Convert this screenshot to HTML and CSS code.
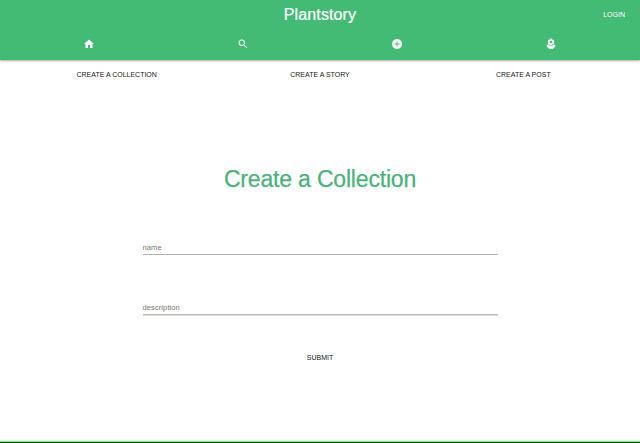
FILE: index.html
```html
<!DOCTYPE html>
<html lang="en">
<head>
<meta charset="utf-8">
<title>Plantstory</title>
<link rel="stylesheet" href="styles.css">
</head>
<body>
<header class="app-bar">
  <div class="top">
    <h1 class="brand">Plantstory</h1>
    <a class="login">LOGIN</a>
  </div>
  <nav class="tabs">
    <a class="tab"><svg class="icon" viewBox="0 0 24 24"><path d="M10 20v-6h4v6h5v-8h3L12 3 2 12h3v8z"/></svg></a>
    <a class="tab"><svg class="icon" viewBox="0 0 24 24"><path d="M15.5 14h-.79l-.28-.27C15.41 12.59 16 11.11 16 9.5 16 5.91 13.09 3 9.5 3S3 5.91 3 9.5 5.91 16 9.5 16c1.61 0 3.09-.59 4.23-1.57l.27.28v.79l5 4.99L20.49 19l-4.99-5zm-6 0C7.01 14 5 11.99 5 9.5S7.01 5 9.5 5 14 7.01 14 9.5 11.99 14 9.5 14z"/></svg></a>
    <a class="tab"><svg class="icon" viewBox="0 0 24 24"><path d="M12 2C6.48 2 2 6.48 2 12s4.48 10 10 10 10-4.48 10-10S17.52 2 12 2zm5 11h-4v4h-2v-4H7v-2h4V7h2v4h4v2z"/></svg></a>
    <a class="tab"><svg class="icon" viewBox="0 0 24 24"><path d="M3 13.5c0 5 4.03 8.500 9 8.500s9-3.500 9-8.500c-4 0-7 1.300-9 3.500-2-2.200-5-3.500-9-3.500zM5.6 10.25c0 1.38 1.12 2.5 2.5 2.5.53 0 1.01-.16 1.42-.44l-.02.19c0 1.38 1.12 2.5 2.5 2.5s2.5-1.12 2.5-2.5l-.02-.19c.4.28.89.44 1.42.44 1.38 0 2.5-1.12 2.5-2.5 0-1-.59-1.85-1.43-2.25.84-.4 1.43-1.25 1.43-2.25 0-1.38-1.12-2.5-2.5-2.5-.53 0-1.01.16-1.42.44l.02-.19C14.5 2.12 13.38 1 12 1S9.5 2.12 9.5 3.5l.02.19c-.4-.28-.89-.44-1.42-.44-1.38 0-2.5 1.12-2.5 2.5 0 1 .59 1.85 1.43 2.25-.84.4-1.43 1.25-1.43 2.25zM12 5.5c1.38 0 2.5 1.12 2.5 2.5s-1.12 2.5-2.5 2.5S9.5 9.38 9.5 8s1.12-2.5 2.5-2.5z"/></svg></a>
  </nav>
</header>
<nav class="actions">
  <a class="action">CREATE A COLLECTION</a>
  <a class="action">CREATE A STORY</a>
  <a class="action">CREATE A POST</a>
</nav>
<main class="form">
  <h2 class="title">Create a Collection</h2>
  <div class="field">name</div>
  <div class="field description">description</div>
  <div class="submit">SUBMIT</div>
</main>
<footer class="edge"></footer>
</body>
</html>
```
FILE: styles.css
```css
* { box-sizing: border-box; }
body {
  margin: 0;
  height: 443px;
  overflow: hidden;
  display: flex;
  flex-direction: column;
  background: #fff;
  font-family: "Liberation Sans", Arial, sans-serif;
  color: #222;
}
.app-bar {
  height: 60px;
  flex: none;
  background: #43bb74;
  color: #fff;
  box-shadow: 0 1px 2px rgba(0, 0, 0, .35);
}
.top {
  height: 30px;
  display: grid;
  grid-template-columns: 1fr auto 1fr;
  align-items: center;
}
.brand { grid-column: 2; margin: 0; font-size: 16px; line-height: 30px; font-weight: 400; letter-spacing: .12px; -webkit-text-stroke: .2px; }
.login { justify-self: end; margin-right: 15px; padding-bottom: 2px; font-size: 7px; }
.tabs { display: flex; height: 30px; padding: 0 11.5px; }
.tab { flex: 1; display: flex; justify-content: center; padding-top: 8px; }
.icon { width: 12px; height: 12px; fill: currentColor; }
.actions {
  display: flex;
  padding: 10px 15px 0;
  font-size: 7px;
  line-height: 9px;
  text-align: center;
}
.action { flex: 1; }
.form { width: 355px; margin: 84px auto 0; display: flex; flex-direction: column; align-items: center; }
.title {
  margin: 0;
  color: #4bb27c;
  font-size: 23px;
  line-height: 32px;
  font-weight: 400;
  letter-spacing: -.18px;
  -webkit-text-stroke: .25px;
}
.field {
  width: 100%;
  height: 14px;
  margin-top: 46px;
  border-bottom: 1px solid #b0b0b0;
  color: #777;
  font-size: 7.5px;
  line-height: 14px;
  letter-spacing: .1px;
}
.description { border-bottom-color: #bbb; box-shadow: 0 1px #ddd; }
.submit { margin-top: 38px; font-size: 7px; line-height: 9px; }
.edge { margin-top: auto; height: 2px; border-top: 1px solid #6df56d; background: #005a00; }
```
